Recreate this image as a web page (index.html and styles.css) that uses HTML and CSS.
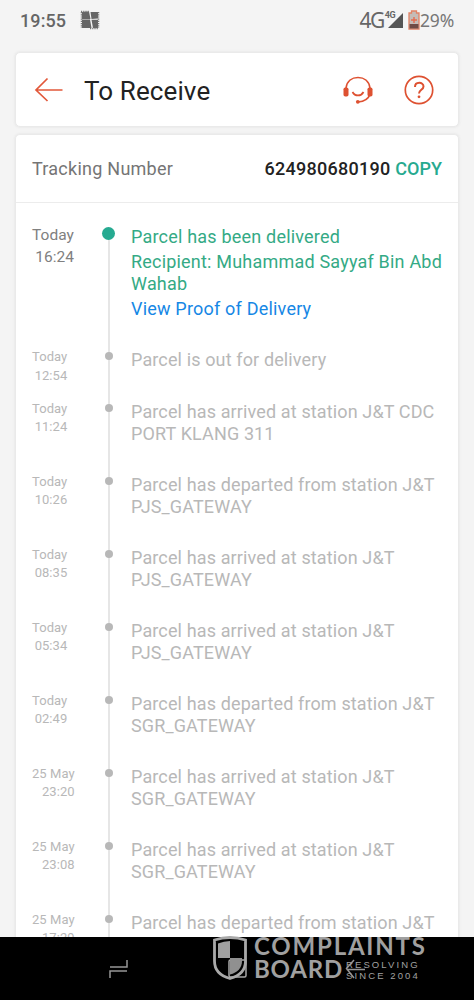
FILE: index.html
```html
<!DOCTYPE html>
<html lang="en">
<head>
<meta charset="utf-8">
<title>To Receive</title>
<link rel="stylesheet" href="styles.css">
</head>
<body>
<div class="screen">
  <div class="status">
    <span class="clock">19:55</span>
    <svg class="notif" width="20" height="20" viewBox="0 0 20 20"><path d="M2 2l7-.5 1.500 7.500-8.500.5zM10.500 2H18v6.500l-6.500.5zM2 10l8-.5 1.500 8.500H2zM11.500 9.800H18V18h-5z" fill="#666"/><path d="M1.500 2v16M18.500 2v16" stroke="#777" stroke-width="1.500" stroke-dasharray="1.200 1"/><path d="M1 1.500h8M10 18.500h8" stroke="#777" stroke-width="1.500" stroke-dasharray="1.200 1"/></svg>
    <span class="net">4G</span>
    <span class="net-small">4G</span>
    <svg class="signal" width="15" height="15" viewBox="0 0 15 15"><path d="M15 0v15H0z" fill="#555"/></svg>
    <svg class="battery" width="12" height="20" viewBox="0 0 12 20"><path d="M3.500 1h5v2H11v16H1V3h2.500z" fill="#c5bcb7" stroke="#e28365" stroke-width="1.300"/><path d="M1.500 14h9v4.500h-9z" fill="#704c46"/><path d="M6 7v6M3 10h6" stroke="#e66c4e" stroke-width="1.400"/></svg>
    <span class="percent">29%</span>
  </div>

  <header class="header card">
    <svg class="back" width="30" height="26" viewBox="0 0 30 26"><path d="M13.500 1.500L2 13l11.500 11M2 13h26.500" fill="none" stroke="#e2583a" stroke-width="1.700"/></svg>
    <h1 class="title">To Receive</h1>
    <svg class="headset" width="30" height="28" viewBox="0 0 30 28"><path d="M3 12C4 5 9 1.500 15 1.500S26 5 27 12M27 18c-1.500 5-6 7.500-12 8" fill="none" stroke="#de5131" stroke-width="1.700"/><path d="M9.500 16c2.500 4.600 8.500 4.600 11 0" fill="none" stroke="#de5131" stroke-width="1.700"/><rect x=".5" y="11.500" width="5" height="9" rx="1.800" fill="#de5131"/><rect x="24.500" y="11.500" width="5" height="9" rx="1.800" fill="#de5131"/><circle cx="14.800" cy="25.800" r="1.900" fill="#de5131"/></svg>
    <svg class="help" width="30" height="30" viewBox="0 0 30 30"><circle cx="15" cy="15" r="13.700" fill="none" stroke="#de5131" stroke-width="1.700"/><path d="M11 12c0-5.500 8.500-5.500 8.500-.5 0 3.200-4.500 3.500-4.500 7" fill="none" stroke="#de5131" stroke-width="2"/><circle cx="15" cy="21.800" r="1.400" fill="#de5131"/></svg>
  </header>

  <main class="tracking card">
    <div class="number-row">
      <span class="label">Tracking Number</span>
      <span class="number">624980680190</span>
      <span class="copy">COPY</span>
    </div>
    <div class="timeline">
      <div class="event current">
        <div class="when">Today<br>16:24</div><div class="track"><i class="dot"></i></div>
        <div class="what"><p class="done">Parcel has been delivered</p><p class="recipient">Recipient: Muhammad Sayyaf Bin Abd<br>Wahab</p><p class="proof">View Proof of Delivery</p></div>
      </div>
      <div class="event short"><div class="when">Today<br>12:54</div><div class="track"><i class="dot"></i></div><div class="what">Parcel is out for delivery</div></div>
      <div class="event"><div class="when">Today<br>11:24</div><div class="track"><i class="dot"></i></div><div class="what">Parcel has arrived at station J&amp;T CDC<br>PORT KLANG 311</div></div>
      <div class="event"><div class="when">Today<br>10:26</div><div class="track"><i class="dot"></i></div><div class="what">Parcel has departed from station J&amp;T<br>PJS_GATEWAY</div></div>
      <div class="event"><div class="when">Today<br>08:35</div><div class="track"><i class="dot"></i></div><div class="what">Parcel has arrived at station J&amp;T<br>PJS_GATEWAY</div></div>
      <div class="event"><div class="when">Today<br>05:34</div><div class="track"><i class="dot"></i></div><div class="what">Parcel has arrived at station J&amp;T<br>PJS_GATEWAY</div></div>
      <div class="event"><div class="when">Today<br>02:49</div><div class="track"><i class="dot"></i></div><div class="what">Parcel has departed from station J&amp;T<br>SGR_GATEWAY</div></div>
      <div class="event"><div class="when">25 May<br>23:20</div><div class="track"><i class="dot"></i></div><div class="what">Parcel has arrived at station J&amp;T<br>SGR_GATEWAY</div></div>
      <div class="event"><div class="when">25 May<br>23:08</div><div class="track"><i class="dot"></i></div><div class="what">Parcel has arrived at station J&amp;T<br>SGR_GATEWAY</div></div>
      <div class="event"><div class="when">25 May<br>17:29</div><div class="track"><i class="dot"></i></div><div class="what">Parcel has departed from station J&amp;T</div></div>
    </div>
  </main>

  <nav class="navbar">
    <svg class="recents" width="20" height="20" viewBox="0 0 20 20"><path d="M1 8h17V1M1 19v-7h17" fill="none" stroke="#969696" stroke-width="1.500"/></svg>
    <svg class="home" width="19" height="19" viewBox="0 0 19 19"><rect x="1" y="1" width="17" height="17" rx="1.500" fill="none" stroke="#a8a8a8" stroke-width="1.500"/></svg>
    <svg class="nav-back" width="21" height="21" viewBox="0 0 21 21"><path d="M9 1L1.500 9.500 9 19M1.500 10.500H20" fill="none" stroke="#969696" stroke-width="1.500"/></svg>
    <div class="watermark">
      <svg class="shield" width="34" height="44" viewBox="0 0 34 44"><path d="M1.500 4Q17-1 32.500 4v21c0 9-6 15-15.500 17.500C7.500 40 1.500 34 1.500 25z" fill="none" stroke="#a9a9a9" stroke-width="2.800"/><path d="M5 7.500Q11 5 17 5v17H5z" fill="#a0a0a0"/><path d="M17 22h12v3c0 7-4.500 11.500-12 13.500z" fill="#909090"/></svg>
      <div class="brand">
        <div class="brand-top">COMPLAINTS</div>
        <div class="brand-bottom"><span class="boards">BOARD</span><span class="tagline">RESOLVING<br>SINCE 2004</span></div>
      </div>
    </div>
  </nav>
</div>
</body>
</html>
```
FILE: styles.css
```css
* { box-sizing: border-box; }
body { margin: 0; background: #f4f4f4; font-family: Roboto, "Liberation Sans", sans-serif; }
p, h1 { margin: 0; font-weight: 400; }
svg { flex: none; display: block; }

.screen { width: 474px; height: 1000px; display: flex; flex-direction: column; overflow: hidden; }
.card { background: #fff; border: 1px solid #eaeaea; box-shadow: 0 0 2px 1px #ebebeb; border-radius: 5px; margin: 0 15px; width: 444px; flex: none; }

.status { height: 52px; flex: none; display: flex; align-items: center; padding: 0 20px 12px; color: #666; white-space: nowrap; }
.clock { font-size: 18px; font-weight: 500; letter-spacing: .1px; width: 60px; }
.net { margin-left: auto; font-family: "Noto Sans", sans-serif; font-size: 21px; letter-spacing: -1.600px; }
.net-small { font-size: 9px; font-weight: 700; margin: -11px -7px 0 1px; z-index: 1; letter-spacing: -.5px; }
.signal { margin-right: 5px; }
.percent { font-family: "Noto Sans", sans-serif; font-size: 17.500px; letter-spacing: -.2px; color: #777; }

.header { height: 75px; display: flex; align-items: center; padding: 0 24px 0 18px; }
.title { font-size: 26px; line-height: 30px; color: #222; margin: 2px 0 0 20px; letter-spacing: .1px; }
.headset { margin-left: auto; margin-right: 31px; }

.tracking { height: 803px; margin-top: 7px; border-bottom: 0; border-radius: 5px 5px 0 0; overflow: hidden; }
.number-row { height: 68px; padding: 0 16px; display: flex; align-items: center; border-bottom: 1px solid #ececec; font-size: 18px; }
.label { color: #757575; letter-spacing: .25px; }
.number { margin-left: auto; color: #222; font-weight: 500; letter-spacing: .25px; }
.copy { margin-left: 5px; color: #26aa8f; font-weight: 500; }

.timeline { padding-top: 20px; }
.event { display: grid; grid-template-columns: 76px 23px 1fr; height: 73.050px; padding-left: 16px; color: #b8b8b8; }
.short { height: 51.300px; }
.current { height: 122.300px; }
.when { justify-self: start; text-align: right; font-size: 13px; line-height: 18.500px; padding-top: 3px; letter-spacing: .05px; }
.track { position: relative; width: 2px; background: #e6e6e6; }
.dot { position: absolute; left: -3px; top: 7px; width: 8px; height: 8px; border-radius: 50%; background: #b8b8b8; }
.what { font-size: 18px; line-height: 22px; padding-top: 4px; letter-spacing: .13px; white-space: nowrap; }

.current .when { font-size: 15.500px; line-height: 22px; color: #808080; padding-top: 1px; }
.current .what { padding-top: 3px; letter-spacing: .2px; }
.current .track { margin-top: 12px; }
.current .dot { width: 13px; height: 13px; left: -6px; top: -8px; background: #26aa91; }
.done, .recipient { color: #34aa85; }
.recipient, .proof { margin-top: 3px; }
.proof { color: #1687e5; }

.navbar { position: relative; z-index: 1; height: 63px; flex: none; background: #000; }
.recents, .home, .nav-back, .watermark { position: absolute; }
.recents { left: 109px; top: 22px; }
.home { left: 228px; top: 22px; }
.nav-back { left: 345px; top: 22px; }
.watermark { left: 213px; top: -1px; display: flex; gap: 7px; color: #a0a0a0; }
.brand { font-family: Lato, sans-serif; font-weight: 700; margin-top: -1px; }
.brand-top { font-size: 24px; line-height: 22px; letter-spacing: 1.800px; }
.brand-bottom { display: flex; gap: 3px; }
.boards { font-size: 24px; line-height: 24px; letter-spacing: .8px; }
.tagline { font-family: "Liberation Sans", sans-serif; font-weight: 400; font-size: 9.500px; line-height: 10.500px; letter-spacing: 2.100px; padding-top: 3px; white-space: nowrap; }
```
